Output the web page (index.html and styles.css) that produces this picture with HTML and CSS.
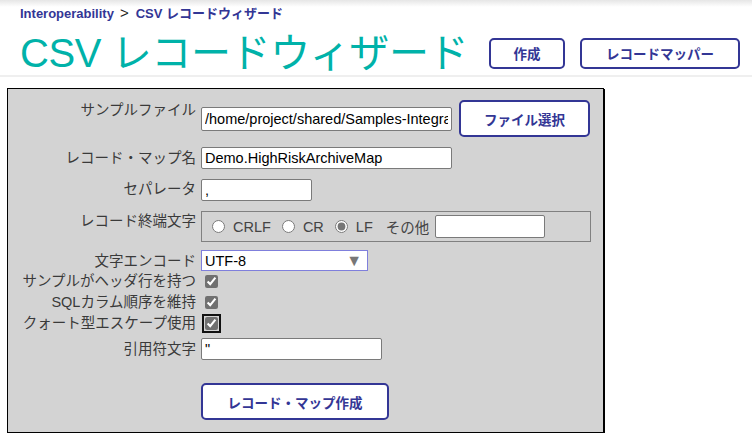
FILE: index.html
```html
<!DOCTYPE html>
<html lang="ja">
<head>
    <meta charset="UTF-8">
    <title>CSV レコードウィザード</title>
    <link rel="stylesheet" href="styles.css">
</head>
<body>
    <div class="header">
        <div class="breadcrumb">Interoperability<span class="sep">&gt;</span>CSV レコードウィザード</div>
        <div class="title-row">
            <h1>CSV レコードウィザード</h1>
            <button type="button" class="btn btn-create">作成</button>
            <button type="button" class="btn btn-mapper">レコードマッパー</button>
        </div>
    </div>

    <form class="wizard">
        <div class="row row-file">
            <label class="label top">サンプルファイル</label>
            <input type="text" class="txt txt-file" value="/home/project/shared/Samples-Integration/data/HighRiskArchive.csv">
            <button type="button" class="btn btn-file">ファイル選択</button>
        </div>
        <div class="row">
            <label class="label">レコード・マップ名</label>
            <input type="text" class="txt txt-long" value="Demo.HighRiskArchiveMap">
        </div>
        <div class="row">
            <label class="label top">セパレータ</label>
            <input type="text" class="txt txt-short" value=",">
        </div>
        <div class="row">
            <label class="label top">レコード終端文字</label>
            <fieldset class="term">
                <label class="opt"><input type="radio" name="term">CRLF</label>
                <label class="opt"><input type="radio" name="term">CR</label>
                <label class="opt"><input type="radio" name="term" checked>LF</label>
                <span class="other">その他</span>
                <input type="text" class="txt txt-other">
            </fieldset>
        </div>
        <div class="row row-enc">
            <label class="label">文字エンコード</label>
            <div class="select-wrap">
                <select class="enc">
                    <option>UTF-8</option>
                    <option>Latin1</option>
                </select>
            </div>
        </div>
        <div class="row row-check">
            <label class="label">サンプルがヘッダ行を持つ</label>
            <input type="checkbox" class="chk" checked>
        </div>
        <div class="row row-check">
            <label class="label">SQLカラム順序を維持</label>
            <input type="checkbox" class="chk" checked>
        </div>
        <div class="row row-check">
            <label class="label">クォート型エスケープ使用</label>
            <input type="checkbox" class="chk focused" checked>
        </div>
        <div class="row row-quote">
            <label class="label">引用符文字</label>
            <input type="text" class="txt txt-quote" value="&quot;">
        </div>
        <div class="row row-submit">
            <span class="label"></span>
            <button type="button" class="btn btn-submit">レコード・マップ作成</button>
        </div>
    </form>
</body>
</html>
```

FILE: styles.css
```css
body {
    margin: 0;
    font-family: "Liberation Sans", "Noto Sans CJK JP", sans-serif;
    background-color: #fff;
}
.header {
    height: 77px;
    box-sizing: border-box;
    padding: 0 20px;
    background: linear-gradient(#e6e6e6, #fff 7px);
    border-bottom: 2px solid #efefef;
}
.breadcrumb {
    padding-top: 5px;
    font-size: 13px;
    line-height: 16px;
    font-weight: bold;
    color: #333695;
}
.breadcrumb .sep {
    margin: 0 7px 0 6px;
    color: #222;
    font-weight: normal;
    font-size: 15px;
}
.title-row {
    display: flex;
    align-items: center;
    margin-top: 9px;
}
h1 {
    flex: 0 0 469px;
    margin: 0;
    font-size: 40px;
    line-height: 44px;
    font-weight: normal;
    letter-spacing: -0.4px;
    color: #00b2a9;
    white-space: nowrap;
}
.btn {
    flex-shrink: 0;
    background-color: #fff;
    border: 2px solid #333695;
    border-radius: 5px;
    color: #333695;
    font-family: "Liberation Sans", "Noto Sans CJK JP", sans-serif;
    font-size: 13.5px;
    font-weight: bold;
    padding: 0;
    cursor: pointer;
}
.btn-create {
    width: 76px;
    height: 31px;
}
.btn-mapper {
    width: 160px;
    height: 31px;
    margin-left: 15px;
}
.wizard {
    width: 597px;
    box-sizing: border-box;
    margin: 11px 0 0 7px;
    padding: 11px 0 12px 10px;
    border: 1px solid #000;
    box-shadow: 1px 1px 0 #000;
    background-color: #d3d3d3;
}
.row {
    display: flex;
    align-items: center;
    margin-top: 10px;
}
.row:first-child {
    margin-top: 0;
}
.label {
    flex: 0 0 178px;
    margin-right: 5px;
    text-align: right;
    font-size: 14.5px;
    line-height: 20px;
    color: #3a3a3a;
    white-space: nowrap;
}
.label.top {
    align-self: flex-start;
}
.txt {
    box-sizing: border-box;
    height: 22px;
    margin: 0;
    padding: 0 3px;
    border: 1px solid #7a7a7a;
    border-radius: 2px;
    background-color: #fff;
    font-family: "Liberation Sans", "Noto Sans CJK JP", sans-serif;
    font-size: 14.5px;
    color: #000;
}
.txt-file {
    width: 251px;
    height: 24px;
}
.txt-long {
    width: 251px;
}
.txt-short {
    width: 111px;
}
.txt-quote {
    width: 181px;
}
.txt-other {
    width: 110px;
    height: 23px;
}
.btn-file {
    width: 131px;
    height: 37px;
    margin-left: 7px;
}
.term {
    display: flex;
    align-items: center;
    box-sizing: border-box;
    width: 390px;
    height: 31px;
    margin: 0;
    padding: 0 0 0 10px;
    border: 1px solid #808080;
}
.opt {
    display: flex;
    align-items: center;
    margin-right: 11px;
    font-size: 14.5px;
    color: #444;
}
.opt input {
    width: 13px;
    height: 13px;
    margin: 0 8px 0 0;
    accent-color: #767676;
}
.other {
    margin: 0 6px 0 2px;
    font-size: 14.5px;
    color: #444;
}
.row-enc {
    margin-top: 8px;
}
.select-wrap {
    position: relative;
}
.select-wrap::after {
    content: "\25BC";
    position: absolute;
    right: 6px;
    top: 1px;
    font-size: 16px;
    line-height: 19px;
    color: #777;
    pointer-events: none;
}
.enc {
    appearance: none;
    width: 167px;
    height: 21px;
    margin: 0;
    padding: 0 3px;
    border: 1px solid #7f7fdc;
    border-radius: 0;
    background-color: #fff;
    font-family: "Liberation Sans", sans-serif;
    font-size: 14.5px;
    color: #000;
}
.row-check {
    margin-top: 0;
}
.row-check .label {
    line-height: 21px;
}
.chk {
    width: 13px;
    height: 13px;
    margin: 0 0 0 4px;
    accent-color: #707070;
}
.chk.focused {
    outline: 2px solid #111;
    outline-offset: 1px;
    border-radius: 2px;
}
.row-quote {
    margin-top: 4px;
}
.row-submit {
    margin-top: 23px;
}
.btn-submit {
    width: 188px;
    height: 37px;
}
```
